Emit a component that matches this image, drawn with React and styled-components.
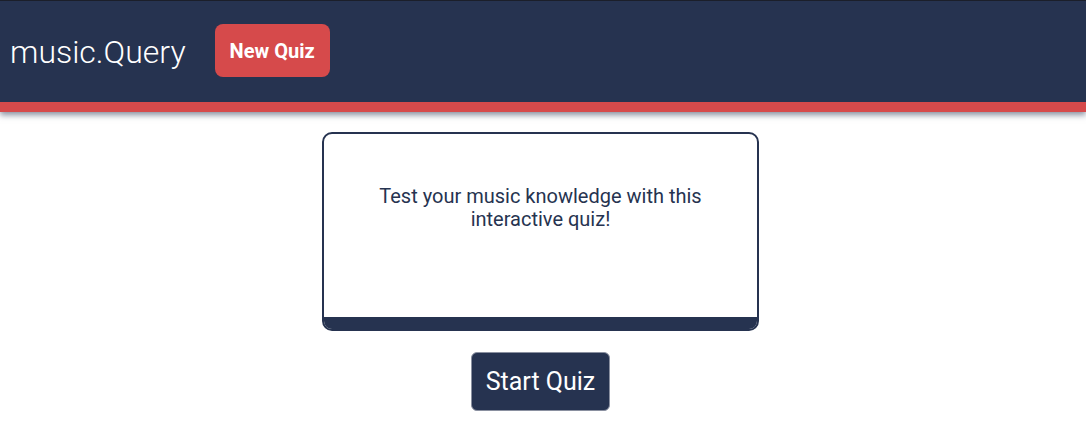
import React from 'react'
import styled, { createGlobalStyle } from 'styled-components'

const navy = '#263350'
const red = '#d64a4b'

const GlobalStyle = createGlobalStyle`
    body {
        margin: 0;
        background: #ffffff;
        font-family: Roboto, "Liberation Sans", sans-serif;
    }
`

// Top bar with the brand and the new quiz button
const Header = styled.header`
    display: flex;
    align-items: center;
    gap: 29px;
    height: 101px;
    padding: 0 10px;
    background-color: ${navy};
    border-top: 1px solid #1b1f2a;
    border-bottom: 10px solid ${red};
    box-shadow: 0 3px 6px rgba(38, 51, 80, 0.55);
`

const Brand = styled.h1`
    margin: 0;
    color: #ffffff;
    font-size: 32px;
    font-weight: 300;
`

const HeaderButton = styled.button`
    height: 53px;
    padding: 0 15px;
    margin-top: -2px;
    border: none;
    border-radius: 8px;
    background-color: ${red};
    color: #ffffff;
    font-family: inherit;
    font-size: 20px;
    font-weight: 700;
`

const Main = styled.main`
    display: flex;
    flex-direction: column;
    align-items: center;
    padding: 20px 5px 0 0;
`

// Card holding the quiz intro text
const Card = styled.section`
    display: flex;
    flex-direction: column;
    width: 433px;
    height: 195px;
    border: 2px solid ${navy};
    border-radius: 10px;
    overflow: hidden;
`

const CardBody = styled.div`
    flex: 1;
    padding: 51px 40px 0;
    text-align: center;
    color: ${navy};
    font-size: 20px;
    line-height: 23px;
`

const CardFooter = styled.div`
    height: 12px;
    background-color: ${navy};
`

const StartButton = styled.button`
    margin-top: 21px;
    width: 139px;
    height: 59px;
    border: 1px solid #8a90a0;
    border-radius: 6px;
    background-color: ${navy};
    color: #ffffff;
    font-family: inherit;
    font-size: 25px;
`

const App = () => (
    <>
        <GlobalStyle />
        <Header>
            <Brand>music.Query</Brand>
            <HeaderButton>New Quiz</HeaderButton>
        </Header>
        <Main>
            <Card>
                <CardBody>Test your music knowledge with this interactive quiz!</CardBody>
                <CardFooter />
            </Card>
            <StartButton>Start Quiz</StartButton>
        </Main>
    </>
)

export default App
